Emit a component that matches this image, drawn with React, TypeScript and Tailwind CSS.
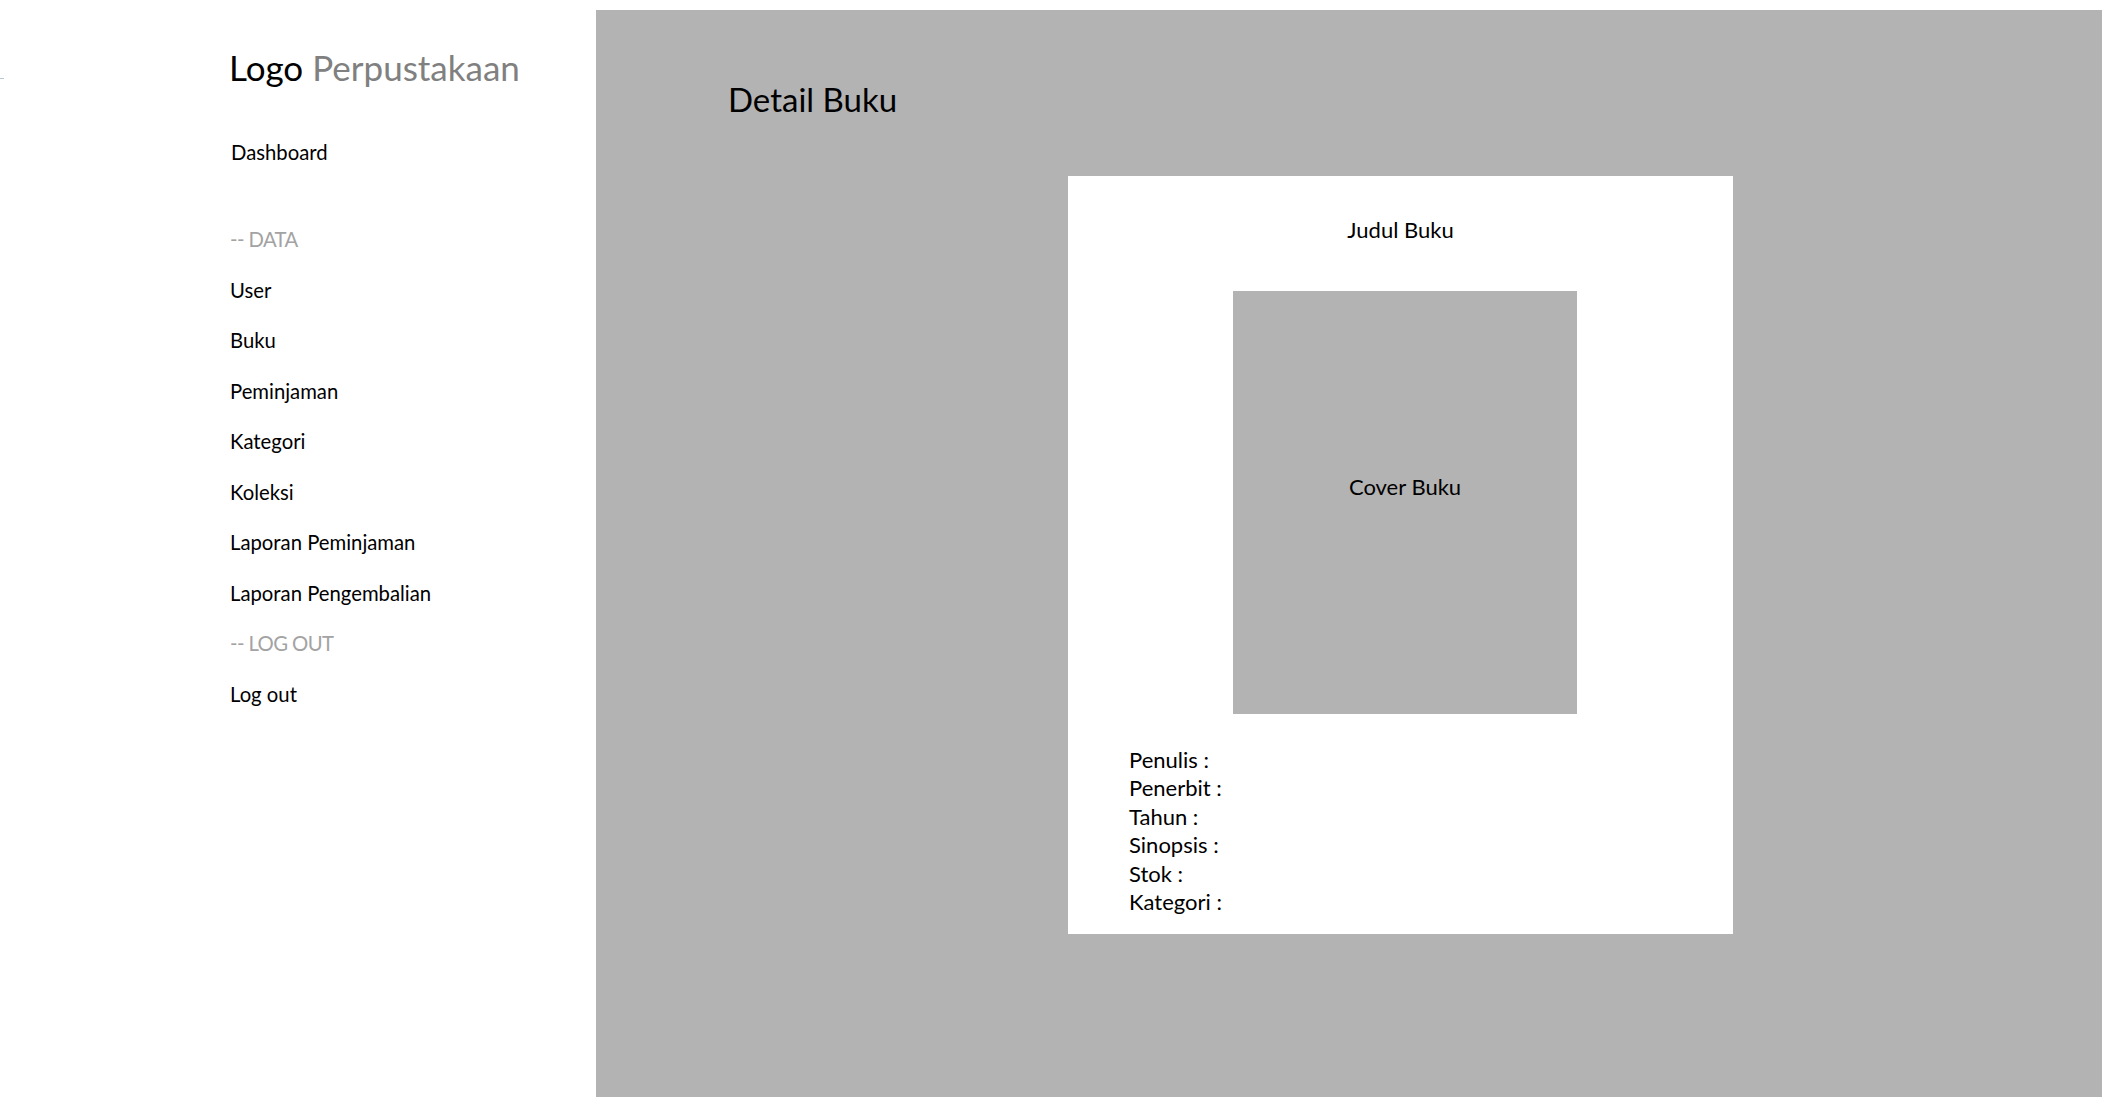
const menu = [
  'User',
  'Buku',
  'Peminjaman',
  'Kategori',
  'Koleksi',
  'Laporan Peminjaman',
  'Laporan Pengembalian',
]

const fields = ['Penulis', 'Penerbit', 'Tahun', 'Sinopsis', 'Stok', 'Kategori']

const Sidebar = () => {
  return (
    <aside className="relative w-[596px] shrink-0 bg-white pl-[229px] pt-[47px]">
      {/* stray mark at the left edge */}
      <span className="absolute left-0 top-[78px] w-[4px] h-[1px] bg-[#b9c7d3]" />
      <div className="h-[40px] flex items-center text-[35px] text-black">
        Logo <span className="ml-[9px] text-[#808080]">Perpustakaan</span>
      </div>
      <div className="mt-[40px] h-[50px] flex items-center pl-[2px] text-[20.3px] text-black">
        Dashboard
      </div>
      <div className="mt-[37px] pl-[1px] text-[20.3px]">
        <div className="h-[50.5px] flex items-center text-[#a3a3a3] tracking-[-0.6px]">-- DATA</div>
        {menu.map((item) => (
          <div key={item} className="h-[50.5px] flex items-center text-black">
            {item}
          </div>
        ))}
        <div className="h-[50.5px] flex items-center text-[#a3a3a3] tracking-[-0.6px]">-- LOG OUT</div>
        <div className="h-[50.5px] flex items-center text-black">Log out</div>
      </div>
    </aside>
  )
}

const DetailCard = () => {
  return (
    <div className="ml-[472px] mt-[56px] w-[665px] h-[758px] bg-white pt-[38px]">
      <div className="h-[30px] flex items-center justify-center text-[22px] text-black">
        Judul Buku
      </div>
      <div className="ml-[165px] mt-[47px] w-[344px] h-[423px] bg-[#b3b3b3] pt-[180px]">
        <div className="h-[30px] flex items-center justify-center text-[22px] text-black">
          Cover Buku
        </div>
      </div>
      <div className="mt-[31px] pl-[61px] text-[22px] text-black">
        {fields.map((f) => (
          <div key={f} className="h-[28.5px] flex items-center">
            {f} :
          </div>
        ))}
      </div>
    </div>
  )
}

const App = () => {
  return (
    <div className="flex w-full h-[1097px] bg-white overflow-hidden font-['Lato',sans-serif]">
      <Sidebar />
      <main className="mt-[10px] w-[1506px] h-[1087px] bg-[#b3b3b3] pt-[70px]">
        <h1 className="h-[40px] flex items-center pl-[132px] text-[33px] text-black">
          Detail Buku
        </h1>
        <DetailCard />
      </main>
    </div>
  )
}

export default App
